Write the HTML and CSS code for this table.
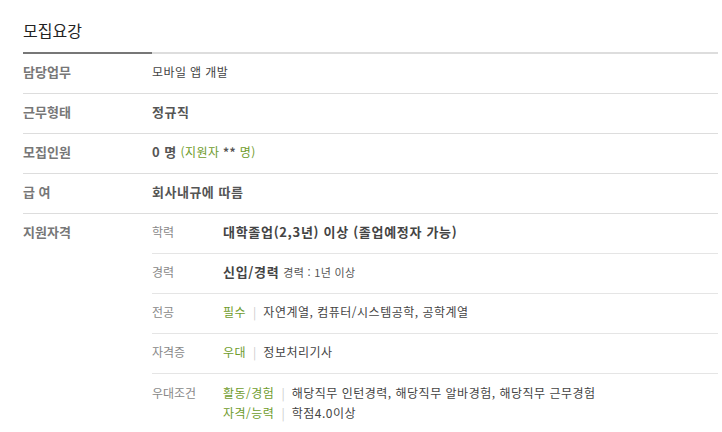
FILE: index.html
```html
<!DOCTYPE html>
<html lang="ko">
<head>
<meta charset="utf-8">
<link rel="stylesheet" href="styles.css">
</head>
<body>
<section class="recruit">
  <h2 class="title">모집요강</h2>
  <div class="row">
    <div class="label">담당업무</div>
    <div class="value">모바일 앱 개발</div>
  </div>
  <div class="row">
    <div class="label">근무형태</div>
    <div class="value"><strong>정규직</strong></div>
  </div>
  <div class="row">
    <div class="label">모집인원</div>
    <div class="value"><strong>0 명</strong> <span class="green">(지원자 <b class="dark">**</b> 명)</span></div>
  </div>
  <div class="row">
    <div class="label">급 여</div>
    <div class="value"><strong>회사내규에 따름</strong></div>
  </div>
  <div class="row row-qual">
    <div class="label">지원자격</div>
    <div class="subs">
      <div class="sub">
        <div class="sublabel">학력</div>
        <div class="subvalue"><strong>대학졸업(2,3년) 이상 (졸업예정자 가능)</strong></div>
      </div>
      <div class="sub">
        <div class="sublabel">경력</div>
        <div class="subvalue"><strong>신입/경력</strong> <span class="small">경력 : 1년 이상</span></div>
      </div>
      <div class="sub">
        <div class="sublabel">전공</div>
        <div class="subvalue"><span class="green">필수</span><span class="sep">|</span>자연계열, 컴퓨터/시스템공학, 공학계열</div>
      </div>
      <div class="sub">
        <div class="sublabel">자격증</div>
        <div class="subvalue"><span class="green">우대</span><span class="sep">|</span>정보처리기사</div>
      </div>
      <div class="sub sub-last">
        <div class="sublabel">우대조건</div>
        <div class="subvalue">
          <div><span class="green">활동/경험</span><span class="sep">|</span>해당직무 인턴경력, 해당직무 알바경험, 해당직무 근무경험</div>
          <div><span class="green">자격/능력</span><span class="sep">|</span>학점4.0이상</div>
        </div>
      </div>
    </div>
  </div>
</section>
</body>
</html>
```

FILE: styles.css
```css
html, body {
  margin: 0;
  padding: 0;
  background: #fff;
}
body {
  font-family: "Noto Sans CJK KR", "Noto Sans", sans-serif;
  color: #333;
}
.recruit {
  margin-left: 23px;
  width: 695px;
}
.title {
  margin: 0;
  padding: 20px 0 12px;
  font-size: 16px;
  line-height: 20px;
  font-weight: normal;
  color: #222;
  border-bottom: 2px solid #ddd;
  position: relative;
}
.title::after {
  content: "";
  position: absolute;
  left: 0;
  bottom: -2px;
  width: 129px;
  height: 2px;
  background: #777;
}
.row {
  display: flex;
  border-bottom: 1px solid #ddd;
}
.label {
  width: 129px;
  flex: none;
  padding: 8px 0 11px;
  font-size: 13px;
  line-height: 20px;
  font-weight: bold;
  color: #777;
}
.value {
  padding: 8px 0 11px;
  font-size: 12px;
  line-height: 20px;
  letter-spacing: 0.4px;
  color: #444;
}
.value strong {
  font-size: 13px;
  letter-spacing: 0.5px;
  color: #555;
}
.green {
  color: #6f9c2c;
}
.dark {
  color: #555;
}
.row-qual {
  border-bottom: 2px solid #e3e3e3;
}
.subs {
  flex: 1;
}
.sub {
  display: flex;
  border-bottom: 1px solid #e5e5e5;
}
.sub-last {
  border-bottom: none;
  padding-bottom: 9px;
}
.sublabel {
  width: 71px;
  flex: none;
  padding: 8px 0 11px;
  font-size: 12px;
  line-height: 20px;
  color: #888;
}
.subvalue {
  padding: 8px 0 11px;
  font-size: 12px;
  line-height: 20px;
  letter-spacing: 0.5px;
  color: #444;
}
.sub-last .subvalue {
  padding-top: 9px;
}
.sub-last .sublabel {
  padding-top: 9px;
}
.subvalue strong {
  font-size: 13px;
  letter-spacing: 0.7px;
  color: #444;
}
.small {
  font-size: 11px;
  letter-spacing: 0.3px;
  color: #555;
}
.sep {
  color: #ccc;
  margin: 0 7px 0 7px;
  letter-spacing: 0;
}
```
